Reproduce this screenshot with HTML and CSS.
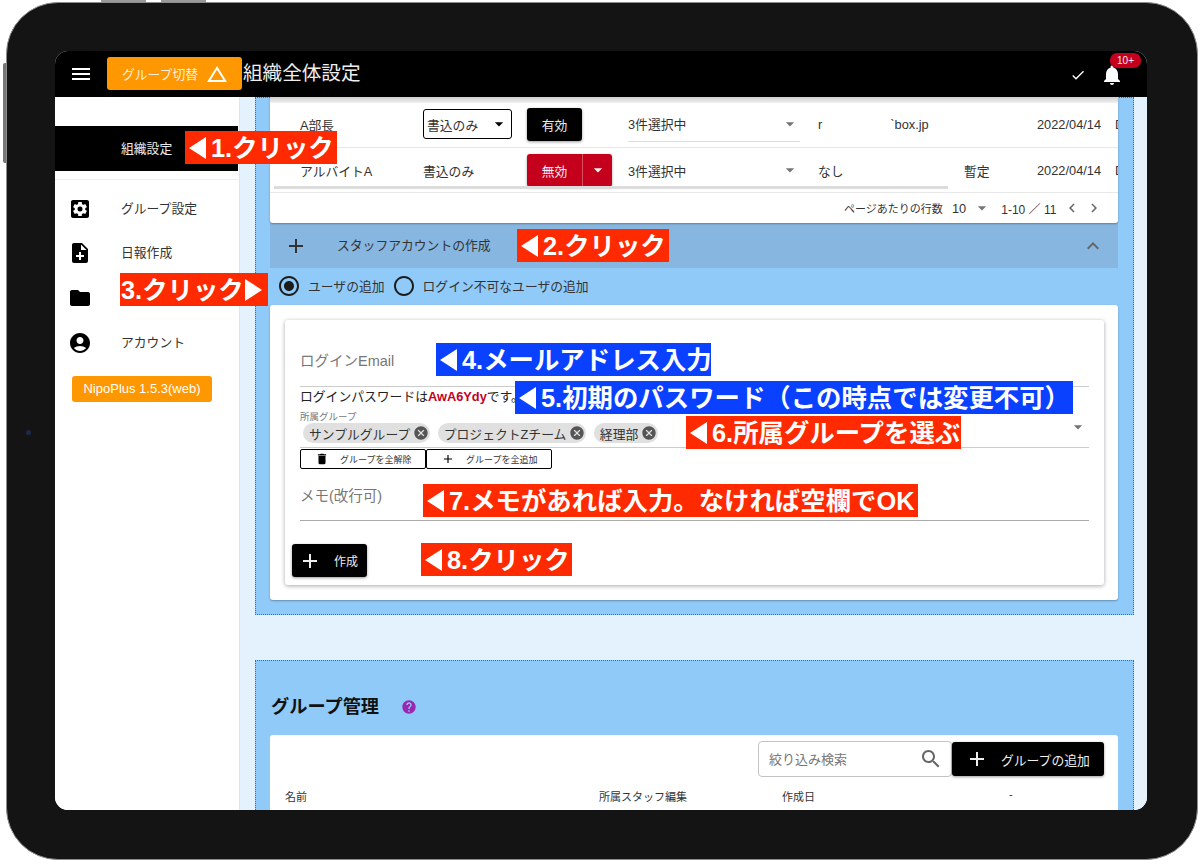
FILE: index.html
```html
<!DOCTYPE html>
<html lang="ja">
<head>
  <meta charset="utf-8">
  <title>組織全体設定</title>
  <link rel="stylesheet" href="styles.css">
</head>
<body>

  <svg class="sprite" xmlns="http://www.w3.org/2000/svg">
    <symbol id="i-menu" viewBox="0 0 24 24"><path d="M3 18h18v-2H3v2zm0-5h18v-2H3v2zm0-7v2h18V6H3z"/></symbol>
    <symbol id="i-delta" viewBox="0 0 24 24"><path d="M12 7.77L18.39 18H5.61L12 7.77M12 4L2 20h20L12 4z"/></symbol>
    <symbol id="i-done" viewBox="0 0 24 24"><path d="M9 16.2L4.8 12l-1.4 1.4L9 19 21 7l-1.4-1.4L9 16.2z"/></symbol>
    <symbol id="i-bell" viewBox="0 0 24 24"><path d="M12 22c1.1 0 2-.9 2-2h-4c0 1.1.9 2 2 2zm6-6v-5c0-3.07-1.63-5.64-4.5-6.32V4c0-.83-.67-1.5-1.5-1.5s-1.5.67-1.5 1.5v.68C7.64 5.36 6 7.92 6 11v5l-2 2v1h16v-1l-2-2z"/></symbol>
    <symbol id="i-settings" viewBox="0 0 24 24"><path fill-rule="evenodd" d="M5 3h14c1.11 0 2 .9 2 2v14c0 1.1-.89 2-2 2H5c-1.11 0-2-.9-2-2V5c0-1.1.89-2 2-2zm12.25 9c0-.23-.02-.46-.05-.69l1.48-1.16c.13-.11.17-.3.08-.45l-1.4-2.42c-.09-.15-.27-.21-.43-.15l-1.74.7c-.36-.28-.75-.51-1.18-.69l-.26-1.85c-.03-.16-.18-.29-.35-.29h-2.8c-.17 0-.32.13-.35.3l-.26 1.85c-.42.18-.82.41-1.18.69l-1.74-.7c-.16-.06-.34 0-.43.15l-1.4 2.42c-.09.15-.05.34.08.45l1.48 1.16c-.03.22-.05.45-.05.68 0 .23.02.46.05.69l-1.48 1.16c-.13.11-.17.3-.08.45l1.4 2.42c.09.15.27.21.43.15l1.74-.7c.36.28.75.51 1.18.69l.26 1.85c.03.16.18.29.35.29h2.8c.17 0 .32-.13.35-.3l.26-1.85c.42-.18.82-.41 1.18-.69l1.74.7c.16.06.34 0 .43-.15l1.4-2.42c.09-.15.05-.34-.08-.45l-1.48-1.16c.03-.22.05-.45.05-.68zM12 9.5a2.5 2.5 0 1 1 0 5 2.5 2.5 0 0 1 0-5z"/></symbol>
    <symbol id="i-note" viewBox="0 0 24 24"><path d="M14 2H6c-1.1 0-1.99.9-1.99 2L4 20c0 1.1.89 2 1.99 2H18c1.1 0 2-.9 2-2V8l-6-6zm2 14h-3v3h-2v-3H8v-2h3v-3h2v3h3v2zm-3-7V3.5L18.5 9H13z"/></symbol>
    <symbol id="i-folder" viewBox="0 0 24 24"><path d="M10 4H4c-1.1 0-1.99.9-1.99 2L2 18c0 1.1.9 2 2 2h16c1.1 0 2-.9 2-2V8c0-1.1-.9-2-2-2h-8l-2-2z"/></symbol>
    <symbol id="i-account" viewBox="0 0 24 24"><path d="M12 2C6.48 2 2 6.48 2 12s4.48 10 10 10 10-4.48 10-10S17.52 2 12 2zm0 4c1.93 0 3.5 1.57 3.5 3.5S13.93 13 12 13s-3.5-1.57-3.5-3.5S10.07 6 12 6zm0 14c-2.03 0-4.43-.82-6.14-2.88C7.55 15.8 9.68 15 12 15s4.45.8 6.14 2.12C16.43 19.18 14.03 20 12 20z"/></symbol>
    <symbol id="i-drop" viewBox="0 0 24 24"><path d="M7 10l5 5 5-5z"/></symbol>
    <symbol id="i-add" viewBox="0 0 24 24"><path d="M19 13h-6v6h-2v-6H5v-2h6V5h2v6h6v2z"/></symbol>
    <symbol id="i-delete" viewBox="0 0 24 24"><path d="M6 19c0 1.1.9 2 2 2h8c1.1 0 2-.9 2-2V7H6v12zM19 4h-3.5l-1-1h-5l-1 1H5v2h14V4z"/></symbol>
    <symbol id="i-cancel" viewBox="0 0 24 24"><path d="M12 2C6.47 2 2 6.47 2 12s4.47 10 10 10 10-4.47 10-10S17.53 2 12 2zm5 13.59L15.59 17 12 13.41 8.41 17 7 15.59 10.59 12 7 8.41 8.41 7 12 10.59 15.59 7 17 8.41 13.41 12 17 15.59z"/></symbol>
    <symbol id="i-search" viewBox="0 0 24 24"><path d="M15.5 14h-.79l-.28-.27C15.41 12.59 16 11.11 16 9.5 16 5.91 13.09 3 9.5 3S3 5.91 3 9.5 5.91 16 9.5 16c1.61 0 3.09-.59 4.23-1.57l.27.28v.79l5 4.99L20.49 19l-4.99-5zm-6 0C7.01 14 5 11.99 5 9.5S7.01 5 9.5 5 14 7.01 14 9.5 11.99 14 9.5 14z"/></symbol>
    <symbol id="i-help" viewBox="0 0 24 24"><path d="M12 2C6.48 2 2 6.48 2 12s4.48 10 10 10 10-4.48 10-10S17.52 2 12 2zm1 17h-2v-2h2v2zm2.07-7.75l-.9.92C13.45 12.9 13 13.5 13 15h-2v-.5c0-1.1.45-2.1 1.17-2.83l1.24-1.26c.37-.36.59-.86.59-1.41 0-1.1-.9-2-2-2s-2 .9-2 2H8c0-2.21 1.79-4 4-4s4 1.79 4 4c0 .88-.36 1.68-.93 2.25z"/></symbol>
    <symbol id="i-up" viewBox="0 0 24 24"><path d="M12 8l-6 6 1.41 1.41L12 10.83l4.59 4.58L18 14z"/></symbol>
    <symbol id="i-left" viewBox="0 0 24 24"><path d="M15.41 7.41L14 6l-6 6 6 6 1.41-1.41L10.83 12z"/></symbol>
    <symbol id="i-right" viewBox="0 0 24 24"><path d="M10 6L8.59 7.41 13.17 12l-4.58 4.59L10 18l6-6z"/></symbol>
    <symbol id="i-radio-on" viewBox="0 0 24 24"><path d="M12 7c-2.76 0-5 2.24-5 5s2.24 5 5 5 5-2.24 5-5-2.24-5-5-5zm0-5C6.48 2 2 6.48 2 12s4.48 10 10 10 10-4.48 10-10S17.52 2 12 2zm0 18c-4.42 0-8-3.58-8-8s3.58-8 8-8 8 3.58 8 8-3.58 8-8 8z"/></symbol>
    <symbol id="i-radio-off" viewBox="0 0 24 24"><path d="M12 2C6.48 2 2 6.48 2 12s4.48 10 10 10 10-4.48 10-10S17.52 2 12 2zm0 18c-4.42 0-8-3.58-8-8s3.58-8 8-8 8 3.58 8 8-3.58 8-8 8z"/></symbol>
  </svg>

  <div class="tablet">
    <div class="side-key"></div>
    <div class="top-key top-key-a"></div>
    <div class="top-key top-key-b"></div>
    <div class="camera"></div>

    <div class="screen">

      <header class="appbar">
        <svg class="icon icon-menu"><use href="#i-menu"/></svg>
        <button class="switch-btn">
          <span>グループ切替</span>
          <svg class="icon"><use href="#i-delta"/></svg>
        </button>
        <h1 class="appbar-title">組織全体設定</h1>
        <div class="appbar-actions">
          <svg class="icon icon-done"><use href="#i-done"/></svg>
          <div class="bell">
            <svg class="icon"><use href="#i-bell"/></svg>
            <span class="badge">10+</span>
          </div>
        </div>
      </header>

      <div class="layout">

        <nav class="sidebar">
          <div class="nav-active">組織設定</div>
          <div class="nav-rule"></div>
          <a class="nav-item"><svg class="icon"><use href="#i-settings"/></svg><span>グループ設定</span></a>
          <a class="nav-item"><svg class="icon"><use href="#i-note"/></svg><span>日報作成</span></a>
          <a class="nav-item"><svg class="icon"><use href="#i-folder"/></svg></a>
          <a class="nav-item"><svg class="icon"><use href="#i-account"/></svg><span>アカウント</span></a>
          <button class="version-btn">NipoPlus 1.5.3(web)</button>
        </nav>

        <main class="content">

          <section class="panel panel-staff">
            <div class="table-card">
              <div class="table-top"></div>
              <div class="row row-first">
                <div>A部長</div>
                <div><span class="mini-select">書込のみ<svg class="icon icon-drop"><use href="#i-drop"/></svg></span></div>
                <div><button class="btn-dark btn-state">有効</button></div>
                <div class="multi">3件選択中<svg class="icon icon-drop-grey"><use href="#i-drop"/></svg></div>
                <div class="mail"><span>r</span><span>`box.jp</span></div>
                <div></div>
                <div>2022/04/14</div>
                <div class="cell-cut">D</div>
              </div>
              <div class="row row-second">
                <div>アルバイトA</div>
                <div>書込のみ</div>
                <div class="split">
                  <button class="btn-red btn-state">無効</button>
                  <button class="btn-red btn-caret"><svg class="icon"><use href="#i-drop"/></svg></button>
                </div>
                <div class="multi">3件選択中<svg class="icon icon-drop-grey"><use href="#i-drop"/></svg></div>
                <div>なし</div>
                <div>暫定</div>
                <div>2022/04/14</div>
                <div class="cell-cut">D</div>
              </div>
              <div class="scroll-thumb"></div>
              <div class="pager">
                <span class="pager-label">ページあたりの行数</span>
                <span class="pager-size">10</span>
                <svg class="icon icon-drop-grey"><use href="#i-drop"/></svg>
                <span class="pager-range">1-10 ／ 11</span>
                <svg class="icon icon-chevron"><use href="#i-left"/></svg>
                <svg class="icon icon-chevron"><use href="#i-right"/></svg>
              </div>
            </div>

            <div class="accordion">
              <svg class="icon"><use href="#i-add"/></svg>
              <span class="accordion-title">スタッフアカウントの作成</span>
              <svg class="icon accordion-caret"><use href="#i-up"/></svg>
            </div>

            <div class="radios">
              <label class="radio"><svg class="icon"><use href="#i-radio-on"/></svg>ユーザの追加</label>
              <label class="radio"><svg class="icon"><use href="#i-radio-off"/></svg>ログイン不可なユーザの追加</label>
            </div>

            <div class="form-card">
              <div class="form-inner">
                <div class="field field-email">ログインEmail</div>
                <div class="password-note">ログインパスワードは<strong>AwA6Ydy</strong>です。</div>
                <div class="group-field">
                  <div class="group-label">所属グループ</div>
                  <div class="chips">
                    <span class="chip">サンプルグループ<svg class="icon"><use href="#i-cancel"/></svg></span>
                    <span class="chip">プロジェクトZチーム<svg class="icon"><use href="#i-cancel"/></svg></span>
                    <span class="chip">経理部<svg class="icon"><use href="#i-cancel"/></svg></span>
                  </div>
                  <svg class="icon icon-drop-grey group-caret"><use href="#i-drop"/></svg>
                </div>
                <div class="group-actions">
                  <button class="btn-outline"><svg class="icon"><use href="#i-delete"/></svg>グループを全解除</button>
                  <button class="btn-outline"><svg class="icon"><use href="#i-add"/></svg>グループを全追加</button>
                </div>
                <div class="field field-memo">メモ(改行可)</div>
                <button class="btn-dark btn-create"><svg class="icon"><use href="#i-add"/></svg>作成</button>
              </div>
            </div>
          </section>

          <section class="panel panel-groups">
            <div class="panel-head">
              <h2>グループ管理</h2>
              <svg class="icon icon-help"><use href="#i-help"/></svg>
            </div>
            <div class="groups-card">
              <div class="groups-tools">
                <div class="search">
                  <span>絞り込み検索</span>
                  <svg class="icon"><use href="#i-search"/></svg>
                </div>
                <button class="btn-dark btn-add-group"><svg class="icon"><use href="#i-add"/></svg>グループの追加</button>
              </div>
              <div class="groups-head">
                <div>名前</div>
                <div>所属スタッフ編集</div>
                <div>作成日</div>
                <div>-</div>
              </div>
            </div>
          </section>

        </main>
      </div>
    </div>
  </div>

  <!-- tutorial labels pasted on top of the screenshot -->
  <div class="callout call-1 red"><i class="arrow"></i>1.クリック</div>
  <div class="callout call-2 red"><i class="arrow"></i>2.クリック</div>
  <div class="callout call-3 red">3.クリック<i class="arrow arrow-right"></i></div>
  <div class="callout call-4 blue"><i class="arrow"></i>4.メールアドレス入力</div>
  <div class="callout call-5 blue"><i class="arrow"></i>5.初期のパスワード（この時点では変更不可）</div>
  <div class="callout call-6 red"><i class="arrow"></i>6.所属グループを選ぶ</div>
  <div class="callout call-7 red"><i class="arrow"></i>7.メモがあれば入力。なければ空欄でOK</div>
  <div class="callout call-8 red"><i class="arrow"></i>8.クリック</div>

</body>
</html>
```

FILE: styles.css
```css
* {
  box-sizing: border-box;
}

html, body {
  margin: 0;
  padding: 0;
  height: 865px;
  overflow: hidden;
  background: #fff;
  color: #333;
  font-family: "Liberation Sans", "Noto Sans CJK JP", sans-serif;
  font-size: 12.8px;
}

button {
  font: inherit;
  border: 0;
  padding: 0;
  cursor: pointer;
}

h1, h2 {
  margin: 0;
  font-weight: normal;
}

.sprite {
  display: none;
}

.icon {
  width: 24px;
  height: 24px;
  flex: none;
  fill: currentColor;
  display: block;
}

/* device */

.tablet {
  position: relative;
  width: 1192px;
  height: 858px;
  margin: 2px 0 0 6px;
  padding: 48px 48px 0 48px;
  background: #141414;
  border: 1px solid #8d8d8d;
  border-radius: 52px;
}

.side-key {
  position: absolute;
  left: -4px;
  top: 60px;
  width: 3px;
  height: 100px;
  background: #777;
  border-radius: 2px 0 0 2px;
}

.top-key {
  position: absolute;
  top: -3px;
  width: 45px;
  height: 2px;
  background: #999;
}

.top-key-a {
  left: 94px;
}

.top-key-b {
  left: 154px;
}

.camera {
  position: absolute;
  left: 19px;
  top: 427px;
  width: 5px;
  height: 5px;
  border-radius: 50%;
  background: #1c2a4a;
}

.screen {
  height: 759px;
  width: 1092px;
  border-radius: 13px;
  overflow: hidden;
  background: #fff;
  display: flex;
  flex-direction: column;
}

/* app bar */

.appbar {
  flex: none;
  height: 46px;
  background: #000;
  color: #fff;
  display: flex;
  align-items: center;
  padding-left: 14px;
  position: relative;
  z-index: 2;
}

.switch-btn {
  width: 135px;
  height: 33px;
  margin-left: 14px;
  margin-top: -1px;
  background: #ff9800;
  color: #fff;
  border-radius: 3px;
  display: flex;
  align-items: center;
  padding-left: 15px;
  gap: 7px;
}

.switch-btn span {
  opacity: .85;
}

.appbar-title {
  margin-left: 1px;
  margin-top: -5px;
  font-size: 19.6px;
  color: #eee;
}

.appbar-actions {
  margin-left: auto;
  display: flex;
  align-items: center;
  padding-right: 23px;
  gap: 14px;
}

.icon-done {
  width: 16px;
  height: 16px;
  margin-top: 2px;
}

.bell {
  position: relative;
  width: 24px;
  height: 24px;
  margin-top: 2px;
}

.badge {
  position: absolute;
  left: 10px;
  top: -10px;
  width: 31px;
  height: 15px;
  background: #c4001d;
  border-radius: 7px;
  font-size: 10px;
  line-height: 15px;
  text-align: center;
  color: #eee;
}

/* layout */

.layout {
  flex: 1;
  min-height: 0;
  display: flex;
}

.sidebar {
  flex: none;
  width: 185px;
  background: #fff;
  border-right: 1px solid #e4e4e4;
  padding-top: 29px;
  color: #333;
}

.nav-active {
  height: 45px;
  margin-right: 1px;
  background: #000;
  color: #eee;
  padding-left: 66px;
  line-height: 45px;
}

.nav-rule {
  height: 1px;
  margin: 8px 1px 6.5px 0;
  background: #eee;
}

.nav-item {
  height: 44.6px;
  display: flex;
  align-items: center;
  padding-left: 13px;
  gap: 29px;
}

.nav-item span {
  margin-top: -3px;
}

.nav-item .icon {
  color: #000;
}

.version-btn {
  display: block;
  width: 140px;
  height: 26px;
  margin: 11px 0 0 17px;
  background: #ff9800;
  color: #fff;
  border-radius: 3px;
  font-size: 13px;
}

.content {
  flex: 1;
  min-width: 0;
  overflow: hidden;
  background: #e3f2fd;
  padding: 0 13px 0 15px;
}

.panel {
  background: #90caf9;
  outline: 1px dotted #3f5bf0;
  outline-offset: -1px;
  padding: 0 16px 15px 15px;
}

/* staff table */

.table-card {
  position: relative;
  height: 126px;
  background: #fff;
  border-radius: 0 0 3px 3px;
  overflow: hidden;
  box-shadow: 0 1px 2px rgba(0, 0, 0, .3);
}

.table-top {
  height: 6px;
  background: linear-gradient(#cfcfcf, #f2f2f2);
}

.row {
  height: 45px;
  display: grid;
  grid-template-columns: 123px 104px 101px 190px 146px 73px 78px 40px;
  padding-left: 30px;
  align-items: center;
  border-bottom: 1px solid #e8e8e8;
}

.row-first {
  padding-bottom: 2px;
}

.mini-select {
  width: 89px;
  height: 30px;
  border: 1px solid #000;
  border-radius: 3px;
  display: flex;
  align-items: center;
  justify-content: space-between;
  padding-left: 3px;
  padding-right: 2px;
}

.icon-drop {
  width: 20px;
  height: 20px;
  color: #000;
}

.icon-drop-grey {
  width: 20px;
  height: 20px;
  color: #757575;
}

.btn-dark {
  background: #000;
  color: #eee;
  border-radius: 3px;
  box-shadow: 0 1px 3px rgba(0, 0, 0, .4);
}

.btn-red {
  background: #c4001d;
  color: #eee;
}

.btn-state {
  width: 55px;
  height: 33px;
  display: block;
  flex: none;
}

.split {
  display: flex;
  box-shadow: 0 1px 3px rgba(0, 0, 0, .35);
  width: 85px;
  border-radius: 3px;
  overflow: hidden;
}

.btn-caret {
  width: 30px;
  border-left: 1px solid #d8505f;
  display: flex;
  align-items: center;
  justify-content: center;
}

.btn-caret .icon {
  width: 20px;
  height: 20px;
}

.multi {
  width: 172px;
  height: 35px;
  border-bottom: 1px solid #ddd;
  display: flex;
  align-items: center;
  justify-content: space-between;
}

.row-second .multi {
  border-bottom: 0;
}

.cell-cut {
  overflow: hidden;
}

.mail {
  display: flex;
  gap: 68px;
}

.scroll-thumb {
  position: absolute;
  left: 4px;
  top: 89px;
  width: 674px;
  height: 3px;
  background: #dcdcdc;
}

.pager {
  height: 30px;
  display: flex;
  align-items: center;
  padding-left: 574px;
  font-size: 11px;
}

.pager-size {
  margin-left: 9px;
  font-size: 12.8px;
}

.pager-label {
  width: 99px;
  white-space: nowrap;
}

.pager .icon-drop-grey {
  margin-left: 6px;
}

.pager-range {
  margin-left: 9px;
  width: 58px;
  white-space: nowrap;
  font-size: 12px;
}

.icon-chevron {
  width: 18px;
  height: 18px;
  margin-left: 4px;
  color: #666;
}

/* accordion + form */

.accordion {
  height: 45px;
  background: #87b6e0;
  display: flex;
  align-items: center;
  padding-left: 14px;
}

.accordion-title {
  margin-left: 29px;
  margin-top: -2px;
}

.accordion-caret {
  margin-left: auto;
  margin-right: 13px;
  color: #666;
}

.radios {
  height: 37px;
  display: flex;
  align-items: center;
  padding: 0 0 2px 7px;
  gap: 7px;
}

.radio {
  display: flex;
  align-items: center;
  gap: 7px;
}

.radio .icon {
  color: #1c1c1c;
}

.form-card {
  background: #fff;
  border-radius: 3px;
  padding: 15px 14px 15px 15px;
  box-shadow: 0 1px 2px rgba(0, 0, 0, .3);
}

.form-inner {
  height: 265px;
  padding: 0 15px;
  border-radius: 3px;
  background: #fff;
  box-shadow: 0 1px 4px rgba(0, 0, 0, .35);
  display: flex;
  flex-direction: column;
  align-items: stretch;
}

.field {
  color: #777;
  font-size: 14.5px;
  border-bottom: 1px solid #bbb;
}

.field-email {
  height: 67px;
  padding-top: 29px;
  border-bottom-color: #ccc;
}

.password-note {
  height: 22px;
  line-height: 20px;
  color: #222;
  white-space: nowrap;
}

.password-note strong {
  color: #c4001d;
}

.group-field {
  position: relative;
  height: 39px;
  border-bottom: 1px solid #ccc;
}

.group-label {
  font-size: 9.5px;
  color: #777;
  line-height: 16px;
  height: 14px;
}

.chips {
  display: flex;
  gap: 8px;
  padding-left: 3px;
}

.chip {
  height: 20px;
  border-radius: 10px;
  background: #e0e0e0;
  color: #333;
  display: flex;
  align-items: center;
  padding: 0 1px 0 6px;
  gap: 2.5px;
  white-space: nowrap;
}

.chip .icon {
  width: 16px;
  height: 16px;
  color: #555;
}

.group-caret {
  position: absolute;
  right: 1px;
  top: 8px;
}

.group-actions {
  display: flex;
  margin-top: 1px;
}

.btn-outline {
  width: 126px;
  height: 20px;
  background: #fff;
  border: 1px solid #000;
  border-radius: 2px;
  display: flex;
  align-items: center;
  padding-left: 14px;
  gap: 11px;
  font-size: 9px;
  color: #333;
}

.btn-outline .icon {
  width: 14px;
  height: 14px;
  color: #000;
}

.field-memo {
  height: 52px;
  padding-top: 15px;
  border-bottom-color: #aaa;
}

.btn-create {
  align-self: flex-start;
  width: 75px;
  height: 33px;
  margin: 23px 0 0 -8px;
  display: flex;
  align-items: center;
  padding-left: 6px;
  gap: 12px;
  font-size: 12px;
}

/* groups */

.panel-groups {
  margin-top: 45px;
  height: 200px;
}

.panel-head {
  height: 75px;
  display: flex;
  align-items: center;
  gap: 22px;
  padding-top: 15px;
  padding-left: 1px;
}

.panel-head h2 {
  font-size: 18.2px;
  font-weight: bold;
  color: #111;
}

.icon-help {
  width: 16px;
  height: 16px;
  color: #9c27b0;
  margin-top: 3px;
}

.groups-card {
  background: #fff;
  border-radius: 3px;
  height: 120px;
}

.groups-tools {
  display: flex;
  justify-content: flex-end;
  align-items: center;
  padding: 6px 14px 0 0;
}

.search {
  width: 194px;
  height: 36px;
  border: 1px solid #c4c4c4;
  border-radius: 4px;
  display: flex;
  align-items: center;
  justify-content: space-between;
  padding: 0 8px 0 10px;
  font-size: 13px;
  color: #777;
}

.search span {
  margin-top: -2px;
}

.search .icon {
  color: #666;
}

.btn-add-group {
  width: 152px;
  height: 34px;
  display: flex;
  align-items: center;
  padding-left: 13px;
  gap: 12px;
}

.groups-head {
  display: grid;
  grid-template-columns: 314px 183px 227px 40px;
  padding: 11px 0 0 15px;
  font-size: 11px;
  color: #333;
}

/* tutorial labels */

.callout {
  position: absolute;
  height: 33px;
  display: flex;
  align-items: center;
  gap: 5px;
  padding: 0 4px 3px;
  color: #fff;
  font-weight: bold;
  font-size: 25.4px;
  white-space: nowrap;
}

.red {
  background: #ff2a00;
}

.blue {
  background: #0a40ff;
}

.arrow {
  width: 0;
  height: 0;
  flex: none;
  margin-top: 3px;
  border-top: 11px solid transparent;
  border-bottom: 11px solid transparent;
  border-right: 17px solid #fff;
}

.arrow-right {
  border-right: 0;
  border-left: 17px solid #fff;
}

.call-1 { left: 185px; top: 131px; width: 152px; }
.call-2 { left: 517px; top: 229px; width: 152px; }
.call-3 { left: 120px; top: 273px; width: 148px; padding-left: 1px; gap: 1px; }
.call-4 { left: 436px; top: 343px; width: 275px; }
.call-5 { left: 515px; top: 381px; width: 558px; }
.call-6 { left: 686px; top: 416px; width: 275px; }
.call-7 { left: 423px; top: 484px; width: 495px; }
.call-8 { left: 421px; top: 543px; width: 151px; }
```
